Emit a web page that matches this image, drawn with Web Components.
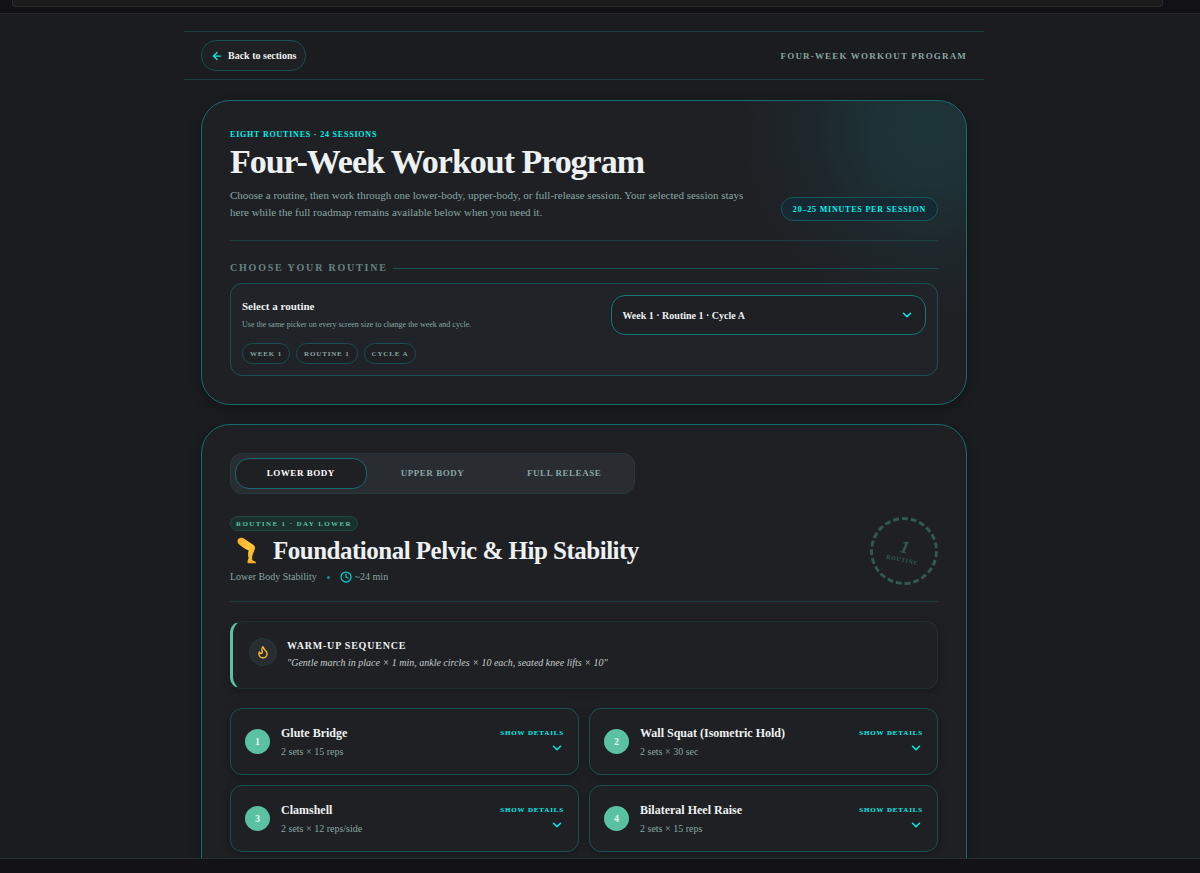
<!DOCTYPE html>
<html lang="en">
<head>
<meta charset="utf-8">
<meta name="viewport" content="width=device-width, initial-scale=1">
<title>Four-Week Workout Program</title>
<style>
  :root {
    --page: #1b1c1f;
    --card: #1f2024;
    --raised: #292c31;
    --text: #edf1f2;
    --muted: #87a6a3;
    --cyan: #00f2ef;
    --mint: #5ac2a0;
    --line: #1c3f41;
    --edge: #136d6f;
    --edge-soft: #195053;
  }

  body {
    margin: 0;
    background: #131217;
    color: var(--text);
    font-family: "Liberation Serif", "Times New Roman", serif;
    font-size: 10px;
  }
</style>
</head>
<body>

<app-frame>
  <program-bar label="Four-Week Workout Program">Back to sections</program-bar>

  <panel-card glow>
    <program-intro>
      <span slot="eyebrow">Eight routines · 24 sessions</span>
      <span slot="title">Four-Week Workout Program</span>
      Choose a routine, then work through one lower-body, upper-body, or full-release session. Your selected session stays here while the full roadmap remains available below when you need it.
      <pill-tag slot="aside" kind="info">20–25 minutes per session</pill-tag>
    </program-intro>
    <section-label>Choose your routine</section-label>
    <routine-picker>
      <pill-tag>Week 1</pill-tag>
      <pill-tag>Routine 1</pill-tag>
      <pill-tag>Cycle A</pill-tag>
    </routine-picker>
  </panel-card>

  <panel-card>
    <session-tabs items="Lower Body,Upper Body,Full Release"></session-tabs>
    <session-header>
      <pill-tag slot="badge" kind="badge">Routine 1 · Day Lower</pill-tag>
      <span slot="title">Foundational Pelvic &amp; Hip Stability</span>
      <span slot="focus">Lower Body Stability</span>
      <span slot="time">~24 min</span>
      <routine-stamp slot="stamp" number="1">Routine</routine-stamp>
    </session-header>
    <warm-up heading="Warm-up sequence">"Gentle march in place × 1 min, ankle circles × 10 each, seated knee lifts × 10"</warm-up>
    <exercise-grid>
      <exercise-card number="1" name="Glute Bridge">2 sets × 15 reps</exercise-card>
      <exercise-card number="2" name="Wall Squat (Isometric Hold)">2 sets × 30 sec</exercise-card>
      <exercise-card number="3" name="Clamshell">2 sets × 12 reps/side</exercise-card>
      <exercise-card number="4" name="Bilateral Heel Raise">2 sets × 15 reps</exercise-card>
    </exercise-grid>
  </panel-card>
</app-frame>

<script>
  const icons = {
    arrow: '<path d="m12 19-7-7 7-7"/><path d="M19 12H5"/>',
    chevron: '<path d="m6 9 6 6 6-6"/>',
    clock: '<circle cx="12" cy="12" r="10"/><path d="M12 6v6l4 2"/>',
    flame: '<path d="M8.5 14.5A2.5 2.5 0 0 0 11 12c0-1.38-.5-2-1-3-1.072-2.143-.224-4.054 2-6 .5 2.5 2 4.9 4 6.5 2 1.6 3 3.5 3 5.5a7 7 0 1 1-14 0c0-1.153.433-2.294 1-3a2.5 2.5 0 0 0 2.5 2.5z"/>'
  }

  const icon = (name, size) => `
    <svg width="${size}" height="${size}" viewBox="0 0 24 24" fill="none" stroke="currentColor"
      stroke-width="2.5" stroke-linecap="round" stroke-linejoin="round" aria-hidden="true">${icons[name]}</svg>
  `

  const base = /*css*/ `
    * {
      box-sizing: border-box;
      margin: 0;
    }

    :host {
      display: block;
      box-sizing: border-box;
    }

    svg {
      display: block;
      flex: none;
    }

    button, select {
      font: inherit;
      color: inherit;
      cursor: pointer;
    }
  `

  class BaseElement extends HTMLElement {
    constructor () {
      super()
      this.shadow = this.attachShadow({ mode: 'open' })
    }

    connectedCallback () {
      this.shadow.innerHTML = `<style>${base}${this.styles()}</style>${this.markup()}`
    }
  }

  class AppFrame extends BaseElement {
    styles () {
      return /*css*/ `
        :host {
          display: flex;
          flex-direction: column;
          height: 100vh;
        }

        .top {
          flex: none;
          height: 13px;
          padding: 0 37px 6px 12px;
          background: #121116;
        }

        .top-panel {
          height: 7px;
          background: #1b1b1b;
          border: 1px solid #2b2c2e;
          border-top: 0;
          border-radius: 0 0 4px 4px;
        }

        main {
          flex: 1;
          min-height: 0;
          overflow: hidden;
          padding: 17px 32px 0 0;
          background: var(--page);
          border-top: 1px solid #26282b;
          border-bottom: 1px solid #2a2e31;
        }

        .column {
          display: flex;
          flex-direction: column;
          gap: 19px;
          max-width: 800px;
          margin: 0 auto;
        }

        footer {
          flex: none;
          height: 14px;
          background: #131217;
        }
      `
    }

    markup () {
      return /*html*/ `
        <div class="top"><div class="top-panel"></div></div>
        <main>
          <div class="column"><slot></slot></div>
        </main>
        <footer></footer>
      `
    }
  }

  class ProgramBar extends BaseElement {
    styles () {
      return /*css*/ `
        :host {
          display: flex;
          align-items: center;
          justify-content: space-between;
          padding: 8px 17px;
          margin-bottom: 1px;
          border-top: 1px solid var(--line);
          border-bottom: 1px solid var(--line);
        }

        button {
          display: flex;
          align-items: center;
          gap: 5px;
          height: 31px;
          padding: 0 9px;
          background: var(--card);
          border: 1px solid var(--edge-soft);
          border-radius: 15px;
          font-weight: 700;
        }

        svg {
          color: var(--cyan);
        }

        .label {
          color: var(--muted);
          font-size: 9px;
          font-weight: 700;
          letter-spacing: 0.13em;
          text-transform: uppercase;
        }
      `
    }

    markup () {
      return /*html*/ `
        <button type="button">${icon('arrow', 12)}<slot></slot></button>
        <span class="label">${this.getAttribute('label')}</span>
      `
    }
  }

  class PanelCard extends BaseElement {
    styles () {
      return /*css*/ `
        :host {
          margin: 0 17px;
          padding: 28px;
          background: var(--card);
          border: 1px solid var(--edge);
          border-radius: 29px;
          box-shadow: 0 4px 12px rgba(0, 0, 0, 0.3);
        }

        :host([glow]) {
          background: radial-gradient(circle at 95% 10%, #1d3438 0, #1d3237 50px, #1e282c 110px, var(--card) 185px);
        }
      `
    }

    markup () {
      return '<slot></slot>'
    }
  }

  class ProgramIntro extends BaseElement {
    styles () {
      return /*css*/ `
        :host {
          display: flex;
          align-items: flex-end;
          justify-content: space-between;
          gap: 20px;
          padding-bottom: 19px;
          border-bottom: 1px solid var(--line);
        }

        .eyebrow {
          color: var(--cyan);
          font-size: 8px;
          font-weight: 700;
          line-height: 11px;
          letter-spacing: 0.1em;
          text-transform: uppercase;
        }

        h1 {
          margin: 5px 0 8px;
          font-size: 34px;
          line-height: 34px;
          letter-spacing: -0.03em;
        }

        .lead {
          color: var(--muted);
          font-size: 11px;
          line-height: 17px;
        }

        ::slotted(pill-tag) {
          flex: none;
        }
      `
    }

    markup () {
      return /*html*/ `
        <div>
          <p class="eyebrow"><slot name="eyebrow"></slot></p>
          <h1><slot name="title"></slot></h1>
          <p class="lead"><slot></slot></p>
        </div>
        <slot name="aside"></slot>
      `
    }
  }

  class PillTag extends BaseElement {
    styles () {
      return /*css*/ `
        :host {
          display: inline-flex;
          align-items: center;
          height: 21px;
          padding: 0 7px;
          background: var(--card);
          border: 1px solid var(--edge-soft);
          border-radius: 12px;
          color: var(--muted);
          font-size: 7px;
          font-weight: 700;
          letter-spacing: 0.12em;
          text-transform: uppercase;
          white-space: nowrap;
        }

        :host([kind="info"]) {
          height: 24px;
          padding: 0 11px;
          background: #162832;
          border-color: #17585e;
          color: var(--cyan);
          font-size: 8px;
          letter-spacing: 0.1em;
        }

        :host([kind="badge"]) {
          height: 15px;
          padding: 0 5px;
          background: #1b2f2c;
          border-color: #1f4a42;
          color: var(--mint);
          letter-spacing: 0.2em;
        }
      `
    }

    markup () {
      return '<slot></slot>'
    }
  }

  class SectionLabel extends BaseElement {
    styles () {
      return /*css*/ `
        :host {
          display: flex;
          align-items: center;
          gap: 5px;
          margin: 21px 0 9px;
        }

        h2 {
          color: #668481;
          font-size: 10px;
          line-height: 12px;
          letter-spacing: 0.18em;
          text-transform: uppercase;
        }

        .rule {
          flex: 1;
          height: 1px;
          background: var(--edge-soft);
        }
      `
    }

    markup () {
      return '<h2><slot></slot></h2><div class="rule"></div>'
    }
  }

  class RoutinePicker extends BaseElement {
    styles () {
      return /*css*/ `
        :host {
          display: grid;
          grid-template-columns: 1fr 46%;
          gap: 12px;
          padding: 11px;
          background: #202327;
          border: 1px solid var(--edge-soft);
          border-radius: 12px;
        }

        label {
          display: block;
          font-size: 11px;
          font-weight: 700;
          line-height: 22px;
        }

        p {
          color: var(--muted);
          font-size: 8px;
          line-height: 15px;
        }

        .tags {
          display: flex;
          gap: 6px;
          margin-top: 11px;
        }

        .field {
          display: grid;
          align-items: center;
          align-self: start;
        }

        select, .field svg {
          grid-area: 1 / 1;
        }

        select {
          appearance: none;
          width: 100%;
          height: 40px;
          padding: 0 10px;
          background: var(--card);
          border: 1px solid #14787a;
          border-radius: 14px;
          font-size: 10px;
          font-weight: 700;
        }

        .field svg {
          justify-self: end;
          margin-right: 12px;
          color: var(--cyan);
          pointer-events: none;
        }
      `
    }

    markup () {
      return /*html*/ `
        <div>
          <label for="routine">Select a routine</label>
          <p>Use the same picker on every screen size to change the week and cycle.</p>
          <div class="tags"><slot></slot></div>
        </div>
        <div class="field">
          <select id="routine">
            <option>Week 1 · Routine 1 · Cycle A</option>
          </select>
          ${icon('chevron', 14)}
        </div>
      `
    }
  }

  class SessionTabs extends BaseElement {
    styles () {
      return /*css*/ `
        :host {
          display: grid;
          grid-auto-flow: column;
          grid-auto-columns: 1fr;
          max-width: 405px;
          padding: 4px;
          background: var(--raised);
          border: 1px solid #263a3e;
          border-radius: 12px;
        }

        button {
          height: 31px;
          padding: 0 0 1px;
          background: none;
          border: 1px solid transparent;
          border-radius: 14px;
          color: var(--muted);
          font-size: 9px;
          font-weight: 700;
          letter-spacing: 0.06em;
          text-transform: uppercase;
        }

        button[aria-selected="true"] {
          background: var(--card);
          border-color: var(--edge);
          color: #fff;
        }
      `
    }

    markup () {
      return this.getAttribute('items').split(',').map((item, index) => /*html*/ `
        <button type="button" role="tab" aria-selected="${index === 0}">${item}</button>
      `).join('')
    }

    connectedCallback () {
      super.connectedCallback()
      this.setAttribute('role', 'tablist')
      const tabs = this.shadow.querySelectorAll('button')

      tabs.forEach(tab => tab.addEventListener('click', () => {
        tabs.forEach(other => other.setAttribute('aria-selected', other === tab))
      }))
    }
  }

  class SessionHeader extends BaseElement {
    styles () {
      return /*css*/ `
        :host {
          display: flex;
          align-items: flex-end;
          justify-content: space-between;
          gap: 20px;
          margin-top: 22px;
          padding-bottom: 16px;
          border-bottom: 1px solid var(--line);
        }

        .badge {
          display: flex;
        }

        .title {
          display: flex;
          align-items: center;
          gap: 9px;
          margin: 6px 0 4px;
        }

        h2 {
          font-size: 25px;
          line-height: 28px;
          letter-spacing: -0.02em;
        }

        .meta {
          display: flex;
          align-items: center;
          color: var(--muted);
          line-height: 16px;
        }

        .dot {
          width: 3px;
          height: 3px;
          margin: 0 10px;
          background: #149294;
          border-radius: 50%;
        }

        .meta svg {
          margin-right: 3px;
          color: #00cfd0;
        }
      `
    }

    markup () {
      return /*html*/ `
        <div>
          <div class="badge"><slot name="badge"></slot></div>
          <div class="title">
            <svg width="34" height="28" viewBox="0 0 34 28" role="img" aria-label="Leg">
              <defs>
                <linearGradient id="skin" x1="0" y1="0" x2="1" y2="1">
                  <stop offset="0" stop-color="#f9a52b"/>
                  <stop offset="0.5" stop-color="#ffc93a"/>
                  <stop offset="1" stop-color="#f2a21f"/>
                </linearGradient>
              </defs>
              <path fill="url(#skin)" d="M7.500 3.800C7.800 1 10.800 0 13.500 1.200L23.500 8C25.200 9.400 25.400 10.800 24.700 12.600L22.200 19V22.800C22.800 24 25.600 24.200 26 25.300V26.200H17.600V23.700L18.600 21C17.700 18 18 15.600 18.700 13.600C15 11.800 11 9.300 8.700 6.900C7.800 6 7.400 4.900 7.500 3.800Z"/>
            </svg>
            <h2><slot name="title"></slot></h2>
          </div>
          <div class="meta">
            <slot name="focus"></slot>
            <span class="dot"></span>
            ${icon('clock', 12)}
            <slot name="time"></slot>
          </div>
        </div>
        <slot name="stamp"></slot>
      `
    }
  }

  class RoutineStamp extends BaseElement {
    styles () {
      return /*css*/ `
        :host {
          display: flex;
          flex: none;
          flex-direction: column;
          align-items: center;
          justify-content: center;
          width: 68px;
          height: 68px;
          border: 3px dashed var(--mint);
          border-radius: 50%;
          color: var(--mint);
          font-weight: 700;
          opacity: 0.35;
          transform: rotate(12deg);
        }

        .number {
          font-size: 18px;
          font-style: italic;
          line-height: 18px;
        }

        .caption {
          font-size: 6px;
          line-height: 8px;
          letter-spacing: 0.1em;
          text-transform: uppercase;
        }
      `
    }

    markup () {
      return /*html*/ `
        <span class="number">${this.getAttribute('number')}</span>
        <span class="caption"><slot></slot></span>
      `
    }
  }

  class WarmUp extends BaseElement {
    styles () {
      return /*css*/ `
        :host {
          display: flex;
          gap: 10px;
          margin: 19px 0;
          padding: 16px 16px 17px;
          border: 1px solid #1e3033;
          border-left: 3px solid var(--mint);
          border-radius: 12px;
          box-shadow: 0 3px 8px rgba(0, 0, 0, 0.25);
        }

        .icon {
          display: grid;
          place-items: center;
          flex: none;
          width: 28px;
          height: 28px;
          background: var(--raised);
          border: 1px solid #263a3e;
          border-radius: 50%;
          color: #f5b82e;
        }

        h3 {
          font-size: 10px;
          line-height: 15px;
          letter-spacing: 0.08em;
          text-transform: uppercase;
        }

        p {
          margin-top: 1px;
          color: #c3cccd;
          font-style: italic;
          line-height: 17px;
        }
      `
    }

    markup () {
      return /*html*/ `
        <span class="icon">${icon('flame', 14)}</span>
        <div>
          <h3>${this.getAttribute('heading')}</h3>
          <p><slot></slot></p>
        </div>
      `
    }
  }

  class ExerciseGrid extends BaseElement {
    styles () {
      return /*css*/ `
        :host {
          display: grid;
          grid-template-columns: 1fr 1fr;
          gap: 10px;
          padding-bottom: 28px;
        }
      `
    }

    markup () {
      return '<slot></slot>'
    }
  }

  class ExerciseCard extends BaseElement {
    styles () {
      return /*css*/ `
        :host {
          display: flex;
          align-items: center;
          gap: 11px;
          height: 67px;
          padding: 0 14px;
          border: 1px solid var(--edge-soft);
          border-radius: 12px;
          box-shadow: 0 3px 8px rgba(0, 0, 0, 0.25);
        }

        .number {
          display: grid;
          place-items: center;
          flex: none;
          width: 25px;
          height: 25px;
          background: var(--mint);
          border-radius: 50%;
          font-weight: 700;
        }

        .info {
          flex: 1;
        }

        h3 {
          font-size: 12px;
          line-height: 16px;
        }

        p {
          margin-top: 4px;
          color: var(--muted);
          line-height: 14px;
        }

        button {
          display: flex;
          flex-direction: column;
          align-items: flex-end;
          gap: 3px;
          padding: 0 0 1px;
          background: none;
          border: 0;
          color: var(--cyan);
          font-size: 7px;
          font-weight: 700;
          line-height: 10px;
          letter-spacing: 0.12em;
          text-transform: uppercase;
        }
      `
    }

    markup () {
      return /*html*/ `
        <span class="number">${this.getAttribute('number')}</span>
        <div class="info">
          <h3>${this.getAttribute('name')}</h3>
          <p><slot></slot></p>
        </div>
        <button type="button">Show details${icon('chevron', 14)}</button>
      `
    }
  }

  customElements.define('app-frame', AppFrame)
  customElements.define('program-bar', ProgramBar)
  customElements.define('panel-card', PanelCard)
  customElements.define('program-intro', ProgramIntro)
  customElements.define('pill-tag', PillTag)
  customElements.define('section-label', SectionLabel)
  customElements.define('routine-picker', RoutinePicker)
  customElements.define('session-tabs', SessionTabs)
  customElements.define('session-header', SessionHeader)
  customElements.define('routine-stamp', RoutineStamp)
  customElements.define('warm-up', WarmUp)
  customElements.define('exercise-grid', ExerciseGrid)
  customElements.define('exercise-card', ExerciseCard)
</script>
</body>
</html>
